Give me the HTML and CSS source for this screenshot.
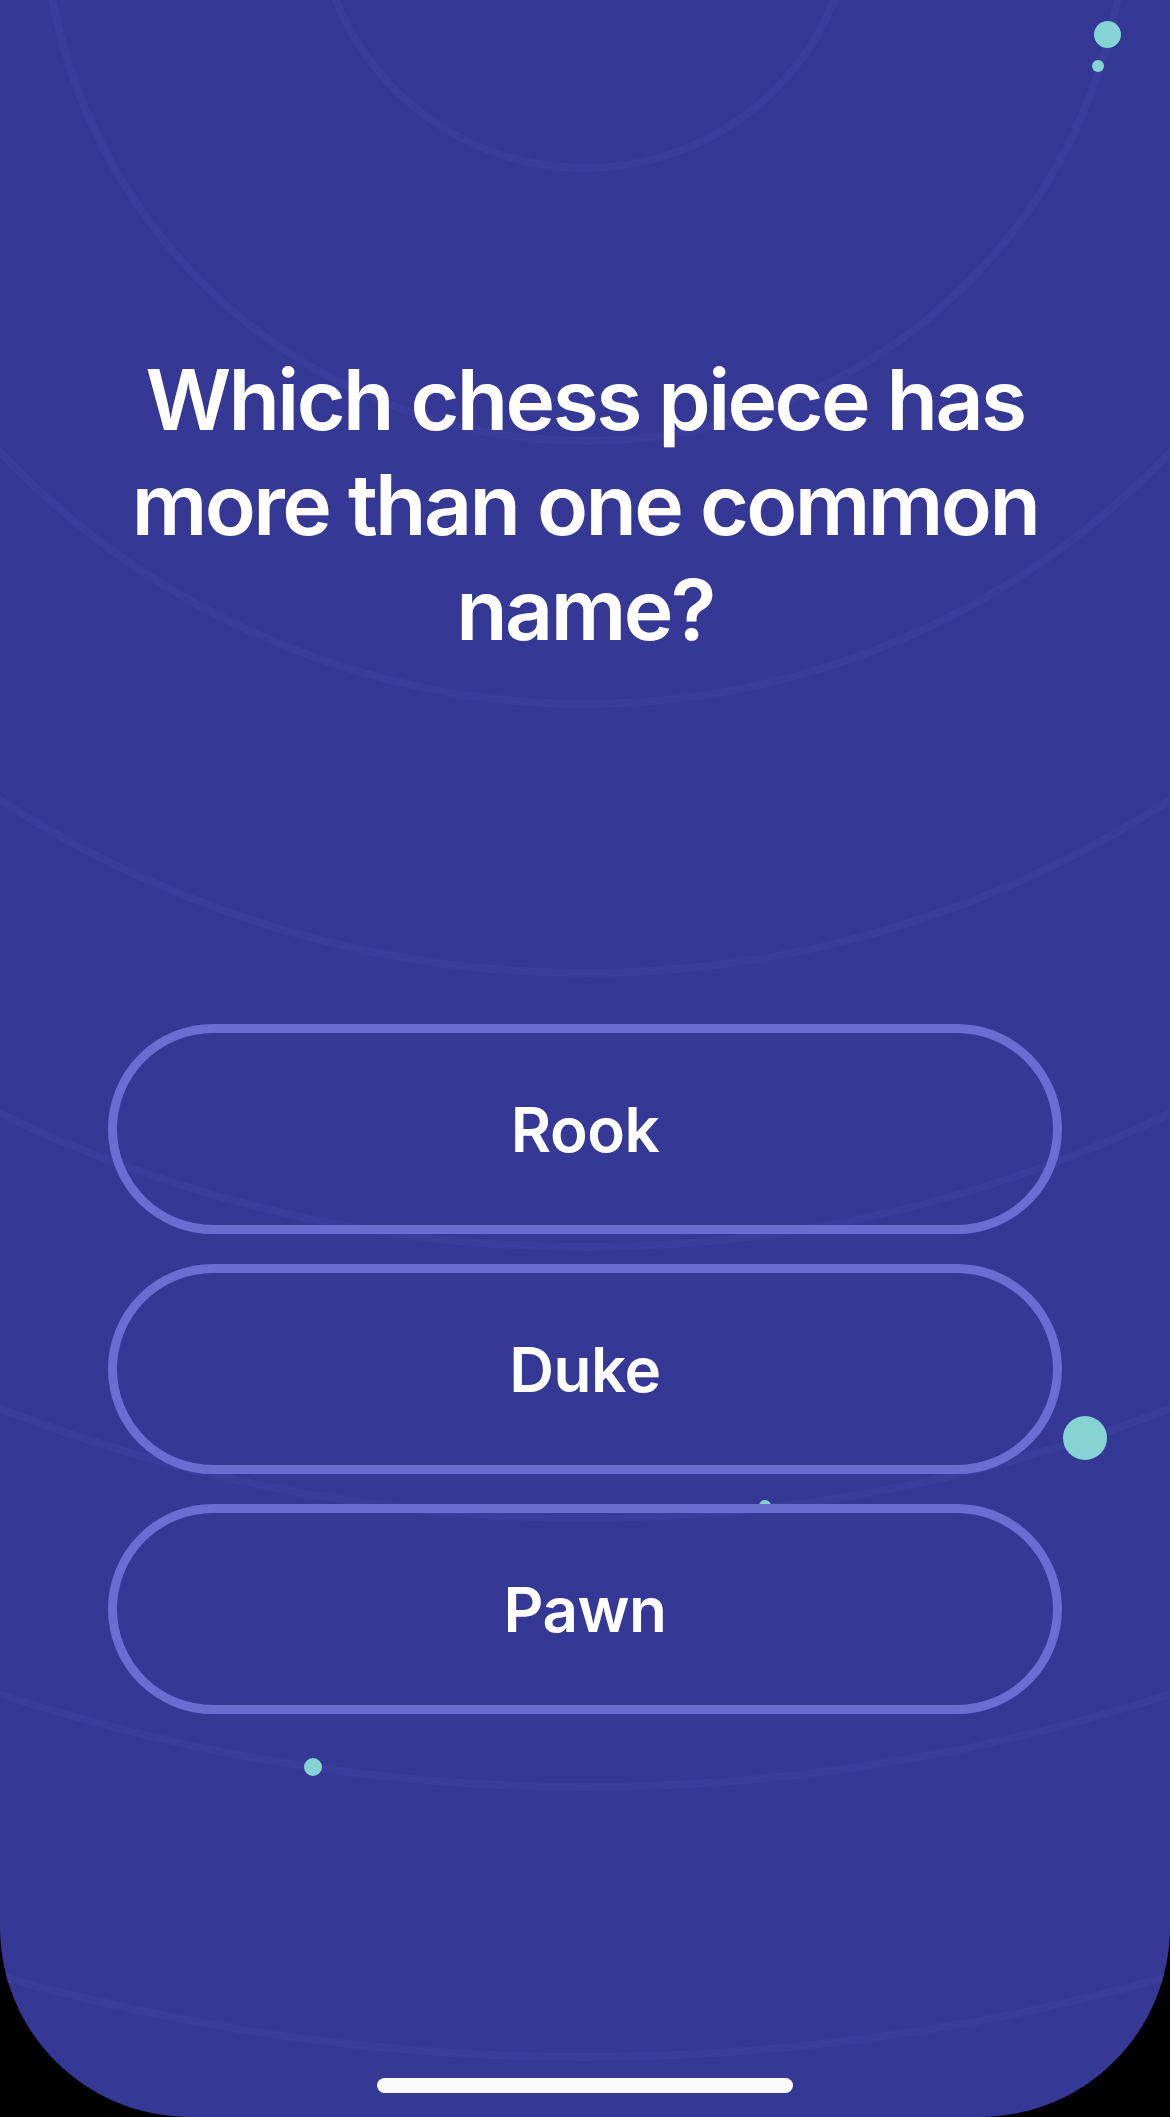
FILE: index.html
```html
<!DOCTYPE html>
<html lang="en">
<head>
<meta charset="utf-8">
<title>Quiz</title>
<link rel="stylesheet" href="styles.css">
</head>
<body>
<div class="screen">
  <svg class="rings" width="1170" height="2117" viewBox="0 0 1170 2117" aria-hidden="true">
    <g fill="none" stroke="#3a3d9b" stroke-width="8">
      <circle cx="585" cy="-101" r="269"/>
      <circle cx="585" cy="-101" r="542"/>
      <circle cx="585" cy="-101" r="805"/>
      <circle cx="585" cy="-101" r="1074"/>
      <circle cx="585" cy="-101" r="1348"/>
      <circle cx="585" cy="-101" r="1619"/>
      <circle cx="585" cy="-101" r="1888"/>
      <circle cx="585" cy="-101" r="2158"/>
    </g>
  </svg>
  <span class="dot dot-tr-big"></span>
  <span class="dot dot-tr-small"></span>
  <span class="dot dot-right"></span>
  <span class="dot dot-mid"></span>
  <span class="dot dot-left"></span>

  <main class="content">
    <h1 class="question">Which chess piece has more than one common name?</h1>
    <div class="answers">
      <button class="answer">Rook</button>
      <button class="answer">Duke</button>
      <button class="answer">Pawn</button>
    </div>
  </main>

  <div class="home-indicator"></div>
</div>
</body>
</html>
```

FILE: styles.css
```css
* { box-sizing: border-box; }

html, body {
  margin: 0;
  padding: 0;
  background: #000;
}

.screen {
  position: relative;
  width: 1170px;
  height: 2117px;
  overflow: hidden;
  background: #353895;
  border-bottom-left-radius: 190px;
  border-bottom-right-radius: 190px;
  font-family: "Inter", "Roboto", "Liberation Sans", sans-serif;
  color: #fff;
}

.rings {
  position: absolute;
  left: 0;
  top: 0;
}

.dot {
  position: absolute;
  border-radius: 50%;
  background: #85d4d3;
}
.dot-tr-big { left: 1094px; top: 21px; width: 27px; height: 27px; }
.dot-tr-small { left: 1092px; top: 60px; width: 12px; height: 12px; }
.dot-right { left: 1063px; top: 1416px; width: 44px; height: 44px; }
.dot-mid { left: 759px; top: 1500px; width: 12px; height: 12px; }
.dot-left { left: 304px; top: 1758px; width: 18px; height: 18px; }

.content {
  position: relative;
  z-index: 1;
  display: flex;
  flex-direction: column;
  align-items: stretch;
  padding-top: 347px;
}

.question {
  margin: 0 auto;
  width: 960px;
  text-align: center;
  font-size: 84px;
  line-height: 105px;
  font-weight: 600;
  letter-spacing: -2.6px;
}

.answers {
  display: flex;
  flex-direction: column;
  gap: 30px;
  padding: 0 108px;
  margin-top: 362px;
}

.answer {
  display: flex;
  align-items: center;
  justify-content: center;
  height: 210px;
  border: 9px solid #6b6ed1;
  border-radius: 105px;
  background: transparent;
  color: #fff;
  font-family: inherit;
  font-size: 62px;
  font-weight: 600;
  letter-spacing: -0.5px;
  padding: 0;
}

.home-indicator {
  position: absolute;
  left: 377px;
  top: 2078px;
  width: 416px;
  height: 15px;
  border-radius: 8px;
  background: #fafafa;
  z-index: 2;
}
```
